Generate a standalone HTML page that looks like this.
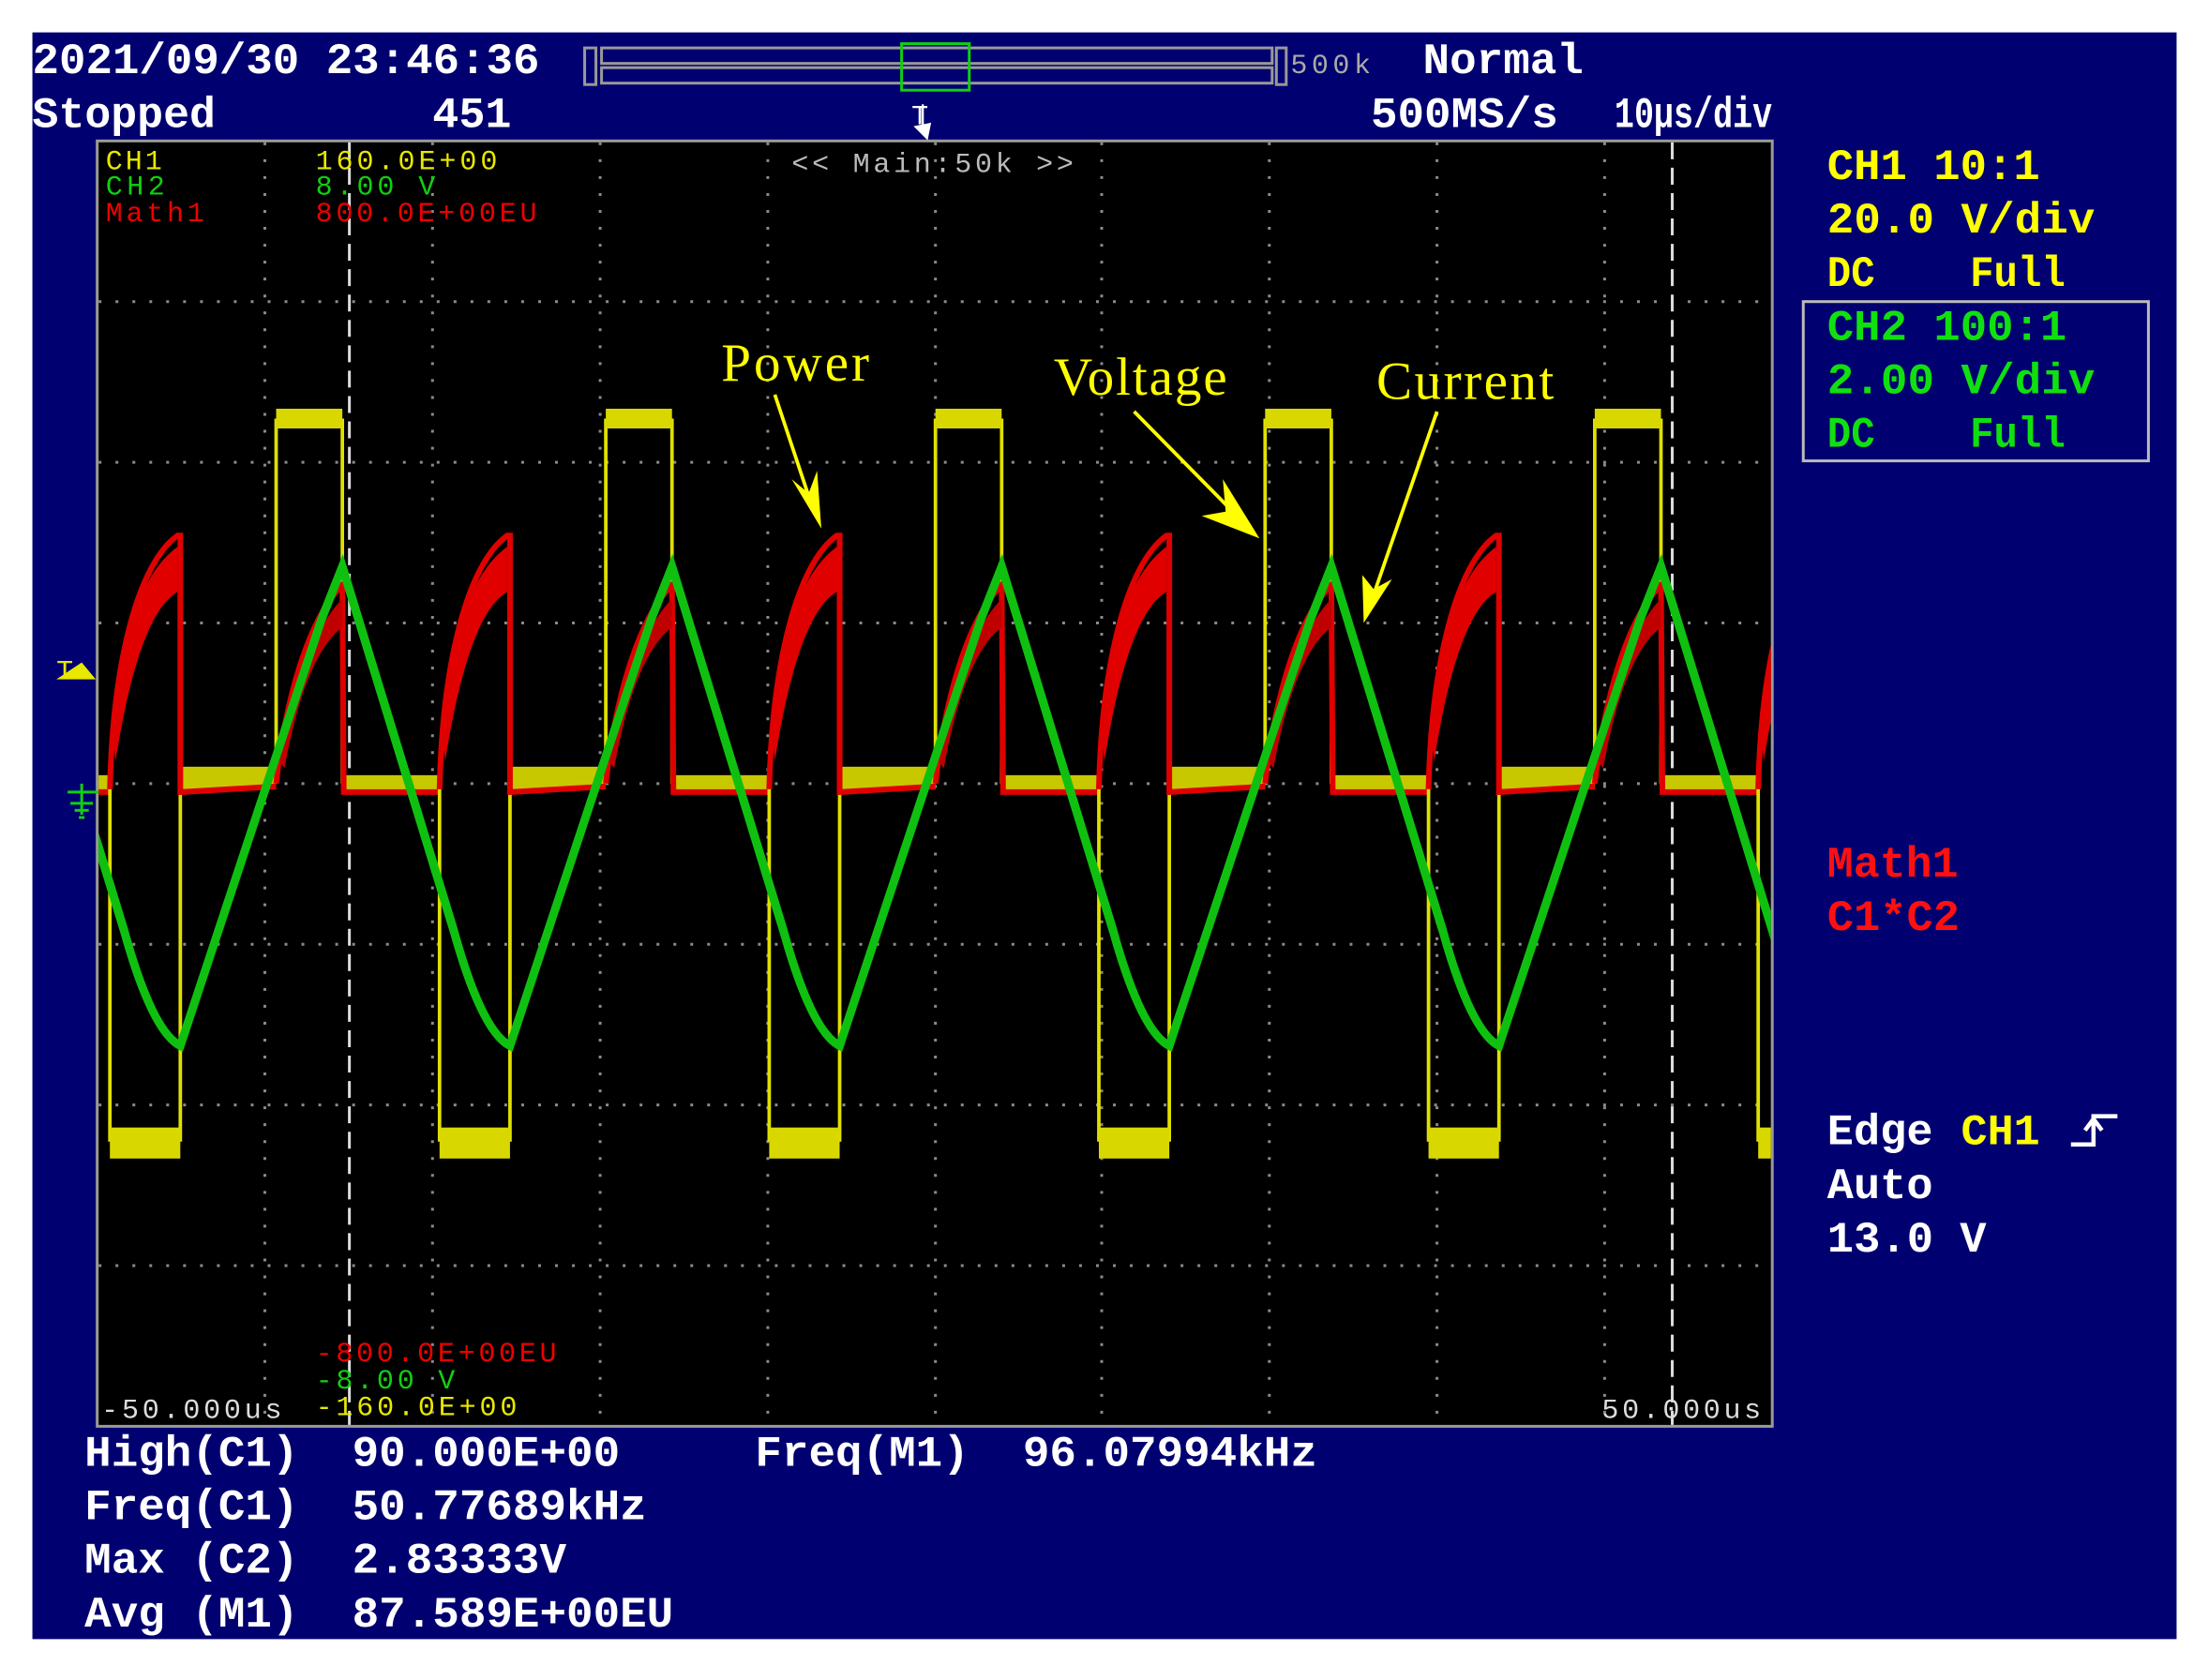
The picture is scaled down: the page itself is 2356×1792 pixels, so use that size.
<!DOCTYPE html>
<html><head><meta charset="utf-8"><style>
html,body{margin:0;padding:0;background:#fff;}
svg{display:block;}
text{white-space:pre;}
.m{font-family:"Liberation Mono",monospace;font-weight:bold;}
.s{font-family:"Liberation Mono",monospace;}
.t{font-family:"Liberation Serif",serif;}
</style></head><body>
<svg width="2356" height="1792" viewBox="0 0 1568 1192" preserveAspectRatio="none" xmlns="http://www.w3.org/2000/svg" xml:space="preserve">
<defs>
<clipPath id="g"><rect x="70" y="101" width="1187" height="910"/></clipPath>
<g id="per">
 <path d="M0,556 L0,810 M50,810 L50,556 M118,556 L118,297 M165,297 L165,556" stroke="#e0e000" stroke-width="2.5" fill="none"/>
 <rect x="0" y="800" width="50" height="22" fill="#d8d800"/>
 <rect x="118" y="290" width="47" height="14" fill="#d8d800"/>
 <rect x="50" y="544" width="68" height="16" fill="#c8c800"/>
 <rect x="165" y="550" width="69" height="12" fill="#c8c800"/>
 <path d="M0,560 C2,470 20,400 48,380 L50,380 L50,562 L118,558 M118,556 C124,500 140,440 165,415 L166,562 L234,562" stroke="#e00000" stroke-width="4" fill="none"/>
 <path d="M2,520 C10,440 25,405 48,388 L48,420 C30,430 15,470 4,540 Z" fill="#e00000"/>
 <path d="M120,540 C128,490 145,445 165,425 L165,445 C145,460 132,500 124,545 Z" fill="#c00000"/>
 <path d="M-69,402 L10,660 Q30,732 50,742 L150,440 L165,402 L244,660" stroke="#10c010" stroke-width="6" fill="none"/>
</g>
</defs>
<rect x="23" y="23" width="1522" height="1140" fill="#000070"/>
<rect x="69" y="100" width="1189" height="912" fill="#000" stroke="#9a9a9a" stroke-width="2"/>
<g stroke="#8a8a8a" stroke-width="2" stroke-dasharray="2 10" fill="none">
 <path d="M70,214H1257M70,328H1257M70,442H1257M70,556H1257M70,670H1257M70,784H1257M70,898H1257"/>
 <path d="M188,101V1011M307,101V1011M426,101V1011M545,101V1011M664,101V1011M782,101V1011M901,101V1011M1020,101V1011M1139,101V1011"/>
</g>
<g stroke="#ddd" stroke-width="2" stroke-dasharray="12 6"><path d="M248,101V1011M1187,101V1011"/></g>
<g clip-path="url(#g)">
 <use href="#per" transform="translate(-156,0)"/>
 <use href="#per" transform="translate(78,0)"/>
 <use href="#per" transform="translate(312,0)"/>
 <use href="#per" transform="translate(546,0)"/>
 <use href="#per" transform="translate(780,0)"/>
 <use href="#per" transform="translate(1014,0)"/>
 <use href="#per" transform="translate(1248,0)"/>
</g>
<g class="s" font-size="20">
<text x="75" y="120" fill="#e8e800" textLength="40">CH1</text>
<text x="75" y="138" fill="#10d010" textLength="42">CH2</text>
<text x="75" y="157" fill="#f00000" textLength="70">Math1</text>
<text x="224" y="120" fill="#e8e800" textLength="129">160.0E+00</text>
<text x="224" y="138" fill="#10d010" textLength="85">8.00 V</text>
<text x="224" y="157" fill="#f00000" textLength="157">800.0E+00EU</text>
<text x="562" y="122" fill="#bbb" textLength="200">&lt;&lt; Main:50k &gt;&gt;</text>
<text x="224" y="966" fill="#f00000" textLength="171">-800.0E+00EU</text>
<text x="224" y="985" fill="#10d010" textLength="99">-8.00 V</text>
<text x="224" y="1004" fill="#e8e800" textLength="143">-160.0E+00</text>
<text x="72" y="1006" fill="#ddd" textLength="128">-50.000us</text>
<text x="1137" y="1006" fill="#ddd" textLength="113">50.000us</text>
</g>
<g class="t" font-size="38" fill="#ffff00">
<text x="512" y="270" textLength="105">Power</text>
<text x="748" y="280" textLength="123">Voltage</text>
<text x="977" y="283" textLength="126">Current</text>
</g>
<g stroke="#ffff00" stroke-width="2.5"><path d="M550,280L576,358M805,292L880,368M1020,292L974,425"/></g>
<g fill="#ffff00">
<path d="M583,375L562,340L574,350L580,334Z"/>
<path d="M894,382L853,366L870,363L868,340Z"/>
<path d="M968,442L967,408L975,418L988,411Z"/>
</g>
<text x="40" y="482" class="s" font-size="20" fill="#e8e800">T</text>
<path d="M40,482H58L68,482L58,470Z" fill="#e8e800"/>
<path d="M48,562H70M58,556V578M50,570H66M53,575H63M56,580H60" stroke="#10d010" stroke-width="2"/>
<g class="m" font-size="31" fill="#fff">
<text x="23" y="52" textLength="360" lengthAdjust="spacingAndGlyphs">2021/09/30 23:46:36</text>
<text x="23" y="90" textLength="130" lengthAdjust="spacingAndGlyphs">Stopped</text>
<text x="307" y="90" textLength="56" lengthAdjust="spacingAndGlyphs">451</text>
<text x="1010" y="52" textLength="114" lengthAdjust="spacingAndGlyphs">Normal</text>
<text x="973" y="90" textLength="133" lengthAdjust="spacingAndGlyphs">500MS/s</text>
<text x="1146" y="90" textLength="112" lengthAdjust="spacingAndGlyphs">10µs/div</text>
</g>
<text x="916" y="52" class="s" font-size="20" fill="#aaa" textLength="57">500k</text>
<rect x="415" y="34" width="8" height="26" fill="none" stroke="#999" stroke-width="2"/>
<rect x="427" y="34" width="476" height="11" fill="none" stroke="#999" stroke-width="2"/>
<rect x="427" y="48" width="476" height="11" fill="none" stroke="#999" stroke-width="2"/>
<rect x="906" y="34" width="7" height="26" fill="none" stroke="#999" stroke-width="2"/>
<rect x="640" y="31" width="48" height="33" fill="none" stroke="#10d010" stroke-width="2"/>
<text x="647" y="88" class="s" font-size="20" fill="#fff">T</text>
<path d="M655,74V92M650,90L658,98L660,88Z" stroke="#fff" fill="#fff" stroke-width="1.5"/>
<g class="m" font-size="31">
<text x="1297" y="127" fill="#ffff00" textLength="151" lengthAdjust="spacingAndGlyphs">CH1 10:1</text>
<text x="1297" y="165" fill="#ffff00" textLength="190" lengthAdjust="spacingAndGlyphs">20.0 V/div</text>
<text x="1297" y="203" fill="#ffff00" textLength="169" lengthAdjust="spacingAndGlyphs">DC    Full</text>
<text x="1297" y="241" fill="#10e010" textLength="170" lengthAdjust="spacingAndGlyphs">CH2 100:1</text>
<text x="1297" y="279" fill="#10e010" textLength="190" lengthAdjust="spacingAndGlyphs">2.00 V/div</text>
<text x="1297" y="317" fill="#10e010" textLength="169" lengthAdjust="spacingAndGlyphs">DC    Full</text>
<text x="1297" y="622" fill="#ff1010" textLength="93" lengthAdjust="spacingAndGlyphs">Math1</text>
<text x="1297" y="660" fill="#ff1010" textLength="94" lengthAdjust="spacingAndGlyphs">C1*C2</text>
<text x="1297" y="812" fill="#fff" textLength="75" lengthAdjust="spacingAndGlyphs">Edge</text>
<text x="1392" y="812" fill="#ffff00" textLength="56" lengthAdjust="spacingAndGlyphs">CH1</text>
<text x="1297" y="850" fill="#fff" textLength="75" lengthAdjust="spacingAndGlyphs">Auto</text>
<text x="1297" y="888" fill="#fff" textLength="113" lengthAdjust="spacingAndGlyphs">13.0 V</text>
</g>
<rect x="1280" y="214" width="245" height="113" fill="none" stroke="#bbb" stroke-width="2"/>
<path d="M1470,812H1486V792H1503M1480,802L1486,794L1492,802" stroke="#fff" stroke-width="3" fill="none"/>
<g class="m" font-size="31" fill="#fff">
<text x="60" y="1040" textLength="152" lengthAdjust="spacingAndGlyphs">High(C1)</text>
<text x="250" y="1040" textLength="190" lengthAdjust="spacingAndGlyphs">90.000E+00</text>
<text x="536" y="1040" textLength="152" lengthAdjust="spacingAndGlyphs">Freq(M1)</text>
<text x="726" y="1040" textLength="209" lengthAdjust="spacingAndGlyphs">96.07994kHz</text>
<text x="60" y="1078" textLength="152" lengthAdjust="spacingAndGlyphs">Freq(C1)</text>
<text x="250" y="1078" textLength="209" lengthAdjust="spacingAndGlyphs">50.77689kHz</text>
<text x="60" y="1116" textLength="152" lengthAdjust="spacingAndGlyphs">Max (C2)</text>
<text x="250" y="1116" textLength="152" lengthAdjust="spacingAndGlyphs">2.83333V</text>
<text x="60" y="1154" textLength="152" lengthAdjust="spacingAndGlyphs">Avg (M1)</text>
<text x="250" y="1154" textLength="228" lengthAdjust="spacingAndGlyphs">87.589E+00EU</text>
</g>
</svg>
</body></html>
